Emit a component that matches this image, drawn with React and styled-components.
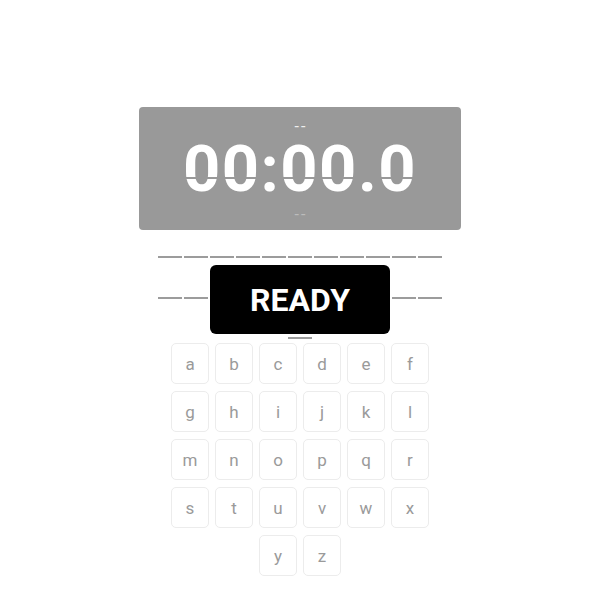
import React from 'react'
import styled, { createGlobalStyle } from 'styled-components'

const GlobalStyle = createGlobalStyle`
    body {
        margin: 0;
        background: #ffffff;
        font-family: Roboto, "Liberation Sans", Arial, sans-serif;
    }
`

const letters = 'abcdefghijklmnopqrstuvwxyz'.split('')
const slots = Array.from({ length: 23 })

const App = () => {
    return (
        <Page>
            <GlobalStyle />
            <Timer>
                <Hint>--</Hint>
                <Digits>00:00.0</Digits>
                <Hint dim>--</Hint>
            </Timer>
            <Word>
                {slots.map((_, i) => (
                    <Slot key={i}>
                        <Dash />
                    </Slot>
                ))}
                <ReadyButton>READY</ReadyButton>
            </Word>
            <Keyboard>
                {letters.map((l) => (
                    <Key key={l}>{l}</Key>
                ))}
            </Keyboard>
        </Page>
    )
}

export default App

const Page = styled.div`
    display: flex;
    flex-direction: column;
    align-items: center;
    padding-top: 107px;
`

const Timer = styled.div`
    width: 322px;
    height: 123px;
    box-sizing: border-box;
    background-color: #999999;
    border-radius: 4px;
    display: flex;
    flex-direction: column;
    align-items: center;
    padding-top: 12px;
`

const Hint = styled.div`
    font-size: 16px;
    line-height: 16px;
    height: 16px;
    letter-spacing: 2px;
    margin-left: 2px;
    color: ${(p) => (p.dim ? '#bcbcbc' : '#eeeeee')};
`

const Digits = styled.div`
    position: relative;
    font-size: 65px;
    font-weight: 700;
    line-height: 60px;
    height: 60px;
    letter-spacing: 1.5px;
    color: #ffffff;
    margin: 4px 0 8px 0;
    &::after {
        content: '';
        position: absolute;
        left: 2px;
        right: 4px;
        top: 38px;
        height: 2px;
        background-color: #999999;
    }
`

const Word = styled.div`
    position: relative;
    width: 286px;
    height: 106px;
    margin-top: 7px;
    display: flex;
    flex-wrap: wrap;
    justify-content: center;
    align-content: flex-start;
`

const Slot = styled.div`
    width: 26px;
    height: 40.5px;
    display: flex;
    align-items: center;
    justify-content: center;
`

const Dash = styled.div`
    width: 24px;
    height: 2px;
    background-color: #9c9c9c;
`

const ReadyButton = styled.button`
    position: absolute;
    top: 28px;
    left: 50%;
    transform: translateX(-50%);
    width: 180px;
    height: 69px;
    border: none;
    border-radius: 6px;
    background-color: #000000;
    color: #ffffff;
    font-family: Roboto, "Liberation Sans", Arial, sans-serif;
    font-size: 32px;
    font-weight: 700;
    cursor: pointer;
`

const Keyboard = styled.div`
    width: 258px;
    display: flex;
    flex-wrap: wrap;
    justify-content: center;
    gap: 7px 6px;
`

const Key = styled.div`
    width: 38px;
    height: 41px;
    box-sizing: border-box;
    border: 1px solid #ececec;
    border-radius: 5px;
    background-color: #ffffff;
    display: flex;
    align-items: center;
    justify-content: center;
    font-size: 17px;
    color: #9a9a9a;
`
